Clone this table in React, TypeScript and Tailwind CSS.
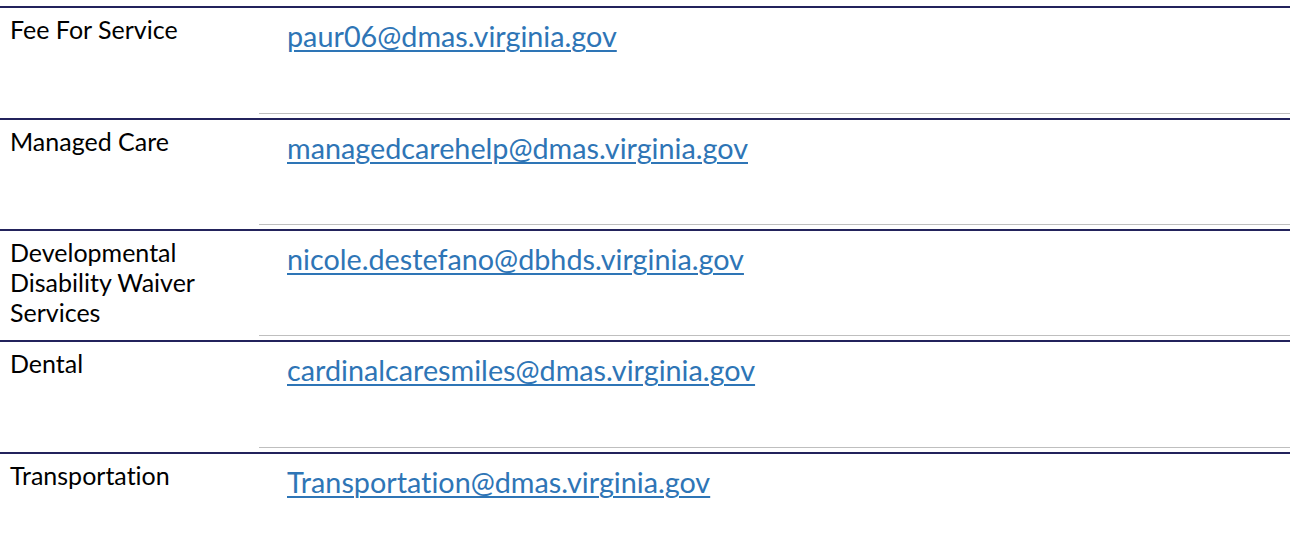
const rows = [
  { label: ["Fee For Service"], email: "paur06@dmas.virginia.gov", h: "h-[112px]" },
  { label: ["Managed Care"], email: "managedcarehelp@dmas.virginia.gov", h: "h-[111px]" },
  {
    label: ["Developmental", "Disability Waiver", "Services"],
    email: "nicole.destefano@dbhds.virginia.gov",
    h: "h-[111px]",
  },
  { label: ["Dental"], email: "cardinalcaresmiles@dmas.virginia.gov", h: "h-[112px]" },
  { label: ["Transportation"], email: "Transportation@dmas.virginia.gov", h: "h-[93px]", last: true },
];

export default function App() {
  return (
    <div
      className="h-[546px] w-[1302px] bg-white pt-[6px] [font-variant-ligatures:none]"
      style={{ fontFamily: "Lato, 'Noto Sans', sans-serif" }}
    >
      <div className="w-[1290px]">
        {rows.map((row) => (
          <div
            key={row.email}
            className={`flex border-t-2 border-[#23235c] ${row.h} ${row.last ? "" : "pb-[4px]"}`}
          >
            <div className="w-[259px] shrink-0 pl-[10px] pt-[6px] text-[25px] leading-[30px] text-black">
              {row.label.map((line) => (
                <div key={line}>{line}</div>
              ))}
            </div>
            <div className={`flex flex-1 flex-col ${row.last ? "" : "border-b border-[#bfbfbf]"}`}>
              <a
                href="#"
                className="pl-[28px] pt-[11px] text-[28.75px] leading-[34px] text-[#2e75b6] underline decoration-[2px] underline-offset-[3px]"
              >
                {row.email}
              </a>
            </div>
          </div>
        ))}
      </div>
    </div>
  );
}
